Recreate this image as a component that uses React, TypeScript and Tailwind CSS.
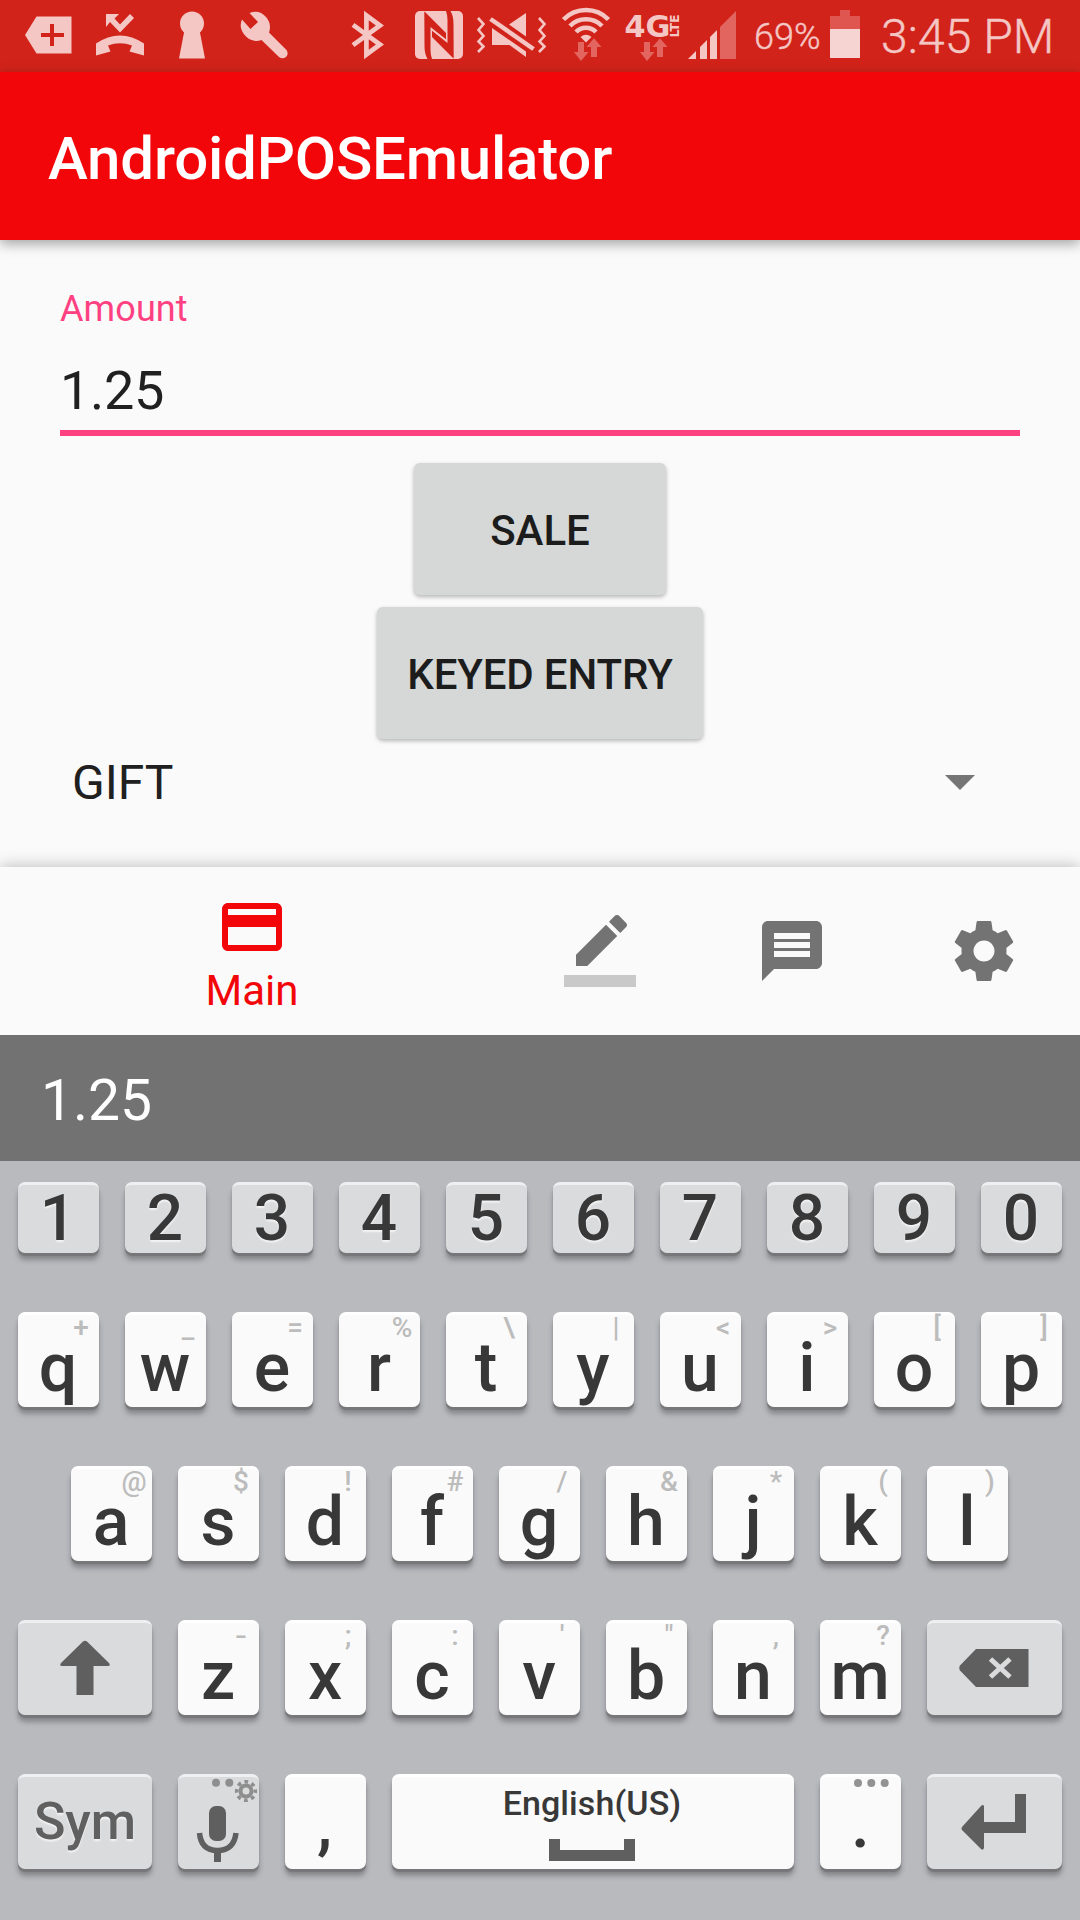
import type { ReactNode } from "react";

type IconProps = { x: number; w: number; className: string; children: ReactNode };

/* Status icons share one 72px tall strip; x is where the drawing starts in it. */
function StatusIcon({ x, w, className, children }: IconProps) {
  return (
    <svg viewBox={`${x} 0 ${w} 72`} width={w} height={72} className={`shrink-0 ${className}`}>
      {children}
    </svg>
  );
}

function DataArrows({ x }: { x: number }) {
  return (
    <g fill="#e2655f" transform={`translate(${x} 0)`}>
      <path d="M4 42h6v10h4.500L7 61 0 52h4z" />
      <path d="M17 57h6V47h4.500L20 38.300 12.500 47H17z" />
    </g>
  );
}

function StatusBar() {
  return (
    <div className="flex h-[72px] items-start bg-[#d2231a] text-[#f4c6c4]">
      <StatusIcon x={24} w={50} className="ml-6 fill-current">
        <path d="M25 35 36.500 16.500H71.500V53.500H36.500Z" />
        <path d="M50 24h4v9h10v4H54v9h-4v-9h-9v-4h9z" fill="#d2231a" />
      </StatusIcon>
      <StatusIcon x={95} w={52} className="ml-[21px] fill-current">
        <path d="M106 14h13l-4.500 4.500 5.500 6L130 14l4 4-14 14.500L110 22l-4 5z" />
        <path d="M96 43.500q24-16 48 0V55.500l-14.500-4 2.500-6q-12-4.500-24 0l2.500 6L96 55.500z" />
      </StatusIcon>
      <StatusIcon x={178} w={30} className="ml-[31px] fill-current">
        <circle cx={192} cy={23.500} r={12} />
        <path d="M184.500 30h15L205 58.500H179z" />
      </StatusIcon>
      <StatusIcon x={239} w={50} className="ml-[31px] fill-current">
        <path d="M249.500 13Q259 9 266 17 272 24 269 32.500L286.500 50Q289 54 286 57 282.500 59.500 279 57L261.500 40Q253 43 246 36.500 238 28 242 19.500L250.500 29 258 22Z" />
      </StatusIcon>
      <StatusIcon x={350} w={36} className="ml-[61px]">
        <path d="M353 24.800 380 44.500 366.400 54.500V15.500L380 25.500 353 45.200" fill="none" stroke="currentColor" strokeWidth={4.700} />
      </StatusIcon>
      <StatusIcon x={414} w={50} className="ml-7">
        <rect x={415} y={11} width={48} height={48} rx={5} fill="#f4c6c4" />
        <g fill="#d2231a">
          <path d="M424.300 11.500 425.500 12.500 446 33V39.300L430.500 27V50Q430.700 56 432 59H427.500Q424.500 54 424.500 46Z" />
          <path d="M453.700 58.500 452.500 57.500 432 37V30.700L447.500 43V20Q447.300 14 446 11H450.500Q453.500 16 453.500 24Z" />
        </g>
      </StatusIcon>
      <StatusIcon x={476} w={72} className="ml-3">
        <g fill="none" stroke="currentColor" strokeWidth={2.600}>
          <path d="M478 18 483.500 24 478.500 30 483.500 36 478.500 41.500 483.500 46.500 478 52" />
          <path d="M539 18 544.500 24 539.500 30 544.500 36 539.500 41.500 544.500 46.500 539 52" />
          <path d="M490.500 19 533.500 49" strokeWidth={4.500} />
        </g>
        <path fill="currentColor" d="M492 28 526 51.500V57L509.500 45H492zM526 13V36.500L509 24.500z" />
      </StatusIcon>
      <StatusIcon x={560} w={52} className="ml-3">
        <g fill="none" stroke="currentColor" strokeWidth={4.600}>
          <path d="M563.500 19.500A31.500 31.500 0 0 1 608.500 19.500" />
          <path d="M570 26A22.500 22.500 0 0 1 602 26" />
          <path d="M576 32A14 14 0 0 1 596 32" />
        </g>
        <path d="M580.500 37Q586 32.500 591.500 37L586 42.500z" fill="currentColor" />
        <DataArrows x={574} />
      </StatusIcon>
      <StatusIcon x={624} w={60} className="ml-3 fill-current font-['DejaVu_Sans'] font-bold">
        <text x={624.500} y={37} fontSize={30} textLength={46} lengthAdjust="spacingAndGlyphs">4G</text>
        <text transform="translate(679 37.500) rotate(-90)" fontSize={12} textLength={23} lengthAdjust="spacingAndGlyphs">LTE</text>
        <DataArrows x={640} />
      </StatusIcon>
      <StatusIcon x={688} w={50} className="ml-1 fill-current">
        <path d="M688 59 696 51V59zM700 47 707 40V59H700zM710 37 717 30V59H710z" />
        <path d="M720 27 736 11V59H720z" fill="#e2655f" />
      </StatusIcon>
      <span className="ml-[16px] w-[76px] pt-[16px] font-light text-[36px] leading-[42px] [-webkit-text-stroke:0.4px_#f4c6c4]">69%</span>
      <StatusIcon x={830} w={30} className="">
        <path d="M840 10h10v6h10v13H830V16h10z" fill="#df5650" />
        <path d="M830 29h30v29H830z" fill="#f6d4d2" />
      </StatusIcon>
      <span className="ml-[21px] pt-[9px] text-[48px] font-light leading-[56px] tracking-[0.1px] [-webkit-text-stroke:0.4px_#f4c6c4]">3:45 PM</span>
    </div>
  );
}

function Content() {
  return (
    <main className="flex h-[627px] flex-col px-[60px] text-[#202020]">
      <label className="pt-[48px] text-[36px] leading-[42px] tracking-[0.1px] text-[#ff4081]">Amount</label>
      <div className="mt-[20px] h-[86px] border-b-6 border-[#ff4081] pt-1.5 text-[54px] leading-[70px] tracking-[-0.3px]">1.25</div>
      <div className="flex flex-col items-center gap-3 pt-[27px] text-[42px] font-medium text-[#1c1c1c]">
        <button className="h-[132px] w-[252px] rounded-[6px] bg-[#d6d7d7] pt-[2px] shadow-[0_2px_4px_rgba(0,0,0,0.28)]">SALE</button>
        <button className="h-[132px] w-[326px] rounded-[6px] bg-[#d6d7d7] pt-[2px] tracking-[-0.15px] shadow-[0_2px_4px_rgba(0,0,0,0.28)]">KEYED ENTRY</button>
      </div>
      <div className="flex h-[86px] items-center justify-between pl-3 pr-[45px] text-[48px]">
        <span className="pt-[2px]">GIFT</span>
        <svg width={30} height={15} viewBox="0 0 30 15" fill="#757575"><path d="M0 0h30L15 15z" /></svg>
      </div>
    </main>
  );
}

const navIcons = [
  <g key="sign">
    <path d="M17.750 7 14 3.250l-10 10V17h3.750l10-10zm2.960-2.960c.39-.39.39-1.020 0-1.410L18.370.29c-.39-.39-1.020-.39-1.410 0L15 2.250 18.750 6l1.960-1.960z" />
    <path fillOpacity={0.36} d="M0 20h24v4H0z" />
  </g>,
  <path key="msg" d="M20 2H4c-1.100 0-1.990.9-1.990 2L2 22l4-4h14c1.100 0 2-.9 2-2V4c0-1.100-.9-2-2-2zm-2 12H6v-2h12v2zm0-3H6V9h12v2zm0-3H6V6h12v2z" />,
  <path key="cfg" d="M19.430 12.980c.04-.32.07-.64.07-.98s-.03-.66-.07-.98l2.110-1.650c.19-.15.24-.42.12-.64l-2-3.460c-.12-.22-.39-.3-.61-.22l-2.490 1c-.52-.4-1.080-.73-1.690-.98l-.38-2.650C14.460 2.180 14.250 2 14 2h-4c-.25 0-.46.18-.49.42l-.38 2.650c-.61.25-1.170.59-1.690.98l-2.490-1c-.23-.09-.49 0-.61.22l-2 3.460c-.13.22-.07.49.12.64l2.110 1.650c-.04.32-.07.65-.07.98s.03.66.07.98l-2.110 1.650c-.19.15-.24.42-.12.64l2 3.460c.12.22.39.3.61.22l2.490-1c.52.4 1.080.73 1.690.98l.38 2.650c.03.24.24.42.49.42h4c.25 0 .46-.18.49-.42l.38-2.650c.61-.25 1.170-.59 1.690-.98l2.490 1c.23.09.49 0 .61-.22l2-3.460c.12-.22.07-.49-.12-.64l-2.110-1.650zM12 15.500c-1.930 0-3.500-1.570-3.500-3.500s1.570-3.500 3.500-3.500 3.500 1.570 3.500 3.500-1.570 3.500-3.500 3.500z" />,
];

function BottomNav() {
  return (
    <nav className="relative flex h-[168px] bg-[#fafafa] shadow-[0_-2px_14px_rgba(0,0,0,0.22)]">
      <div className="flex w-[504px] flex-col items-center pt-6 text-[42px] leading-[48px] text-[#f2060a]">
        <svg width={72} height={72} viewBox="0 0 24 24" fill="currentColor">
          <path d="M20 4H4c-1.110 0-1.990.89-1.990 2L2 18c0 1.110.89 2 2 2h16c1.110 0 2-.89 2-2V6c0-1.110-.89-2-2-2zm0 14H4v-6h16v6zm0-10H4V6h16v2z" />
        </svg>
        <span className="mt-1">Main</span>
      </div>
      {navIcons.map((icon, i) => (
        <div key={i} className="flex w-[192px] justify-center pt-12">
          <svg width={72} height={72} viewBox="0 0 24 24" fill="#737373">{icon}</svg>
        </div>
      ))}
    </nav>
  );
}

const keyShadow = "shadow-[0_3px_1px_#77777a,0_7px_5px_rgba(60,60,65,0.4)]";

function Key({ dark = false, wide = "w-[81px]", height = "h-[95px]", children }: { dark?: boolean; wide?: string; height?: string; children: ReactNode }) {
  return (
    <div
      className={`relative flex shrink-0 justify-center rounded-[7px] border-t-[3px] ${wide} ${height} ${keyShadow} ${
        dark ? "border-[#eeeff0] bg-[#dadbdd]" : "border-white bg-[#fafafa]"
      }`}
    >
      {children}
    </div>
  );
}

function Letter({ char, hint }: { char: string; hint: string }) {
  return (
    <Key>
      <span className={`absolute left-[43px] top-[-4px] w-10 text-center text-[28px] font-medium leading-[34px] text-[#bcbcbc] ${hint === "-" ? "scale-x-125" : ""}`}>{hint}</span>
      <span className="relative -left-[0.5px] pt-[13px] text-[68px] font-medium leading-[80px]">{char}</span>
    </Key>
  );
}

const row2 = [["q", "+"], ["w", "_"], ["e", "="], ["r", "%"], ["t", "\\"], ["y", "|"], ["u", "<"], ["i", ">"], ["o", "["], ["p", "]"]];
const row3 = [["a", "@"], ["s", "$"], ["d", "!"], ["f", "#"], ["g", "/"], ["h", "&"], ["j", "*"], ["k", "("], ["l", ")"]];
const row4 = [["z", "-"], ["x", ";"], ["c", ":"], ["v", "'"], ["b", "\""], ["n", ","], ["m", "?"]];

function Keyboard() {
  return (
    <section className="flex h-[759px] flex-col gap-[59px] bg-[#b9babe] px-[18px] pt-[21px] text-[#383838]">
      <div className="flex justify-between">
        {"1234567890".split("").map((n) => (
          <Key key={n} dark height="h-[71px]">
            <span className="relative -left-[0.5px] -top-1 text-[64px] font-medium leading-[75px] [text-shadow:0_2px_2px_rgba(255,255,255,0.7)]">{n}</span>
          </Key>
        ))}
      </div>
      <div className="flex justify-between">{row2.map(([c, h]) => <Letter key={c} char={c} hint={h} />)}</div>
      <div className="flex gap-[26px] pl-[53px]">{row3.map(([c, h]) => <Letter key={c} char={c} hint={h} />)}</div>
      <div className="flex justify-between">
        <Key dark wide="w-[134px]">
          <svg width={52} height={58} viewBox="0 0 52 58" className="mt-[17px] fill-[#5f5f5f]">
            <path d="M24 1.500Q26 0 28 1.500L50 23Q52 26 49 26H34.500V55H17.500V26H3Q0 26 2 23z" />
          </svg>
        </Key>
        {row4.map(([c, h]) => <Letter key={c} char={c} hint={h} />)}
        <Key dark wide="w-[135px]">
          <svg width={70} height={38} viewBox="0 0 70 38" className="mr-[1px] mt-[26px]">
            <path d="M17 0H69.500V38H17L1 21.500Q-.5 19 1 16.500z" fill="#5f5f5f" />
            <path d="M31.500 10 51 28M51 10 31.500 28" stroke="#dadbdd" strokeWidth={5} />
          </svg>
        </Key>
      </div>
      <div className="flex justify-between">
        <Key dark wide="w-[134px]">
          <span className="pt-[14px] text-[52px] font-medium leading-[62px] text-[#606060] [text-shadow:0_2px_2px_rgba(255,255,255,0.7)]">Sym</span>
        </Key>
        <Key dark>
          <svg width={81} height={92} viewBox="178 1777 81 92" className="shrink-0">
            <g fill="#8e8e8e">
              <circle cx={216} cy={1782.700} r={4} />
              <circle cx={229.300} cy={1782.700} r={4} />
              <circle cx={246} cy={1791} r={5.500} fill="none" stroke="#8e8e8e" strokeWidth={4} />
              <circle cx={246} cy={1791} r={9.300} fill="none" stroke="#8e8e8e" strokeWidth={3.600} strokeDasharray="3.650 3.650" strokeDashoffset={1.800} />
            </g>
            <rect x={209} y={1806} width={17} height={35} rx={7} fill="#5f5f5f" />
            <path d="M199.500 1833Q201 1850.500 217.500 1850.500T236 1833" fill="none" stroke="#5f5f5f" strokeWidth={5.500} />
            <path d="M214 1851h7v11h-7z" fill="#5f5f5f" />
          </svg>
        </Key>
        <Key><span className="relative -left-px pt-[7px] text-[68px] font-medium leading-[80px]">,</span></Key>
        <Key wide="w-[402px]">
          <div className="mr-[1px] flex flex-col items-center pt-[6px] text-[34px] font-medium leading-[40px]">
            <span className="mr-[1px] tracking-[0.1px]">English(US)</span>
            <svg width={86} height={22} viewBox="0 0 86 22" className="mt-[16px]"><path d="M0 0H11V11H75V0H86V22H0z" fill="#5f5f5f" /></svg>
          </div>
        </Key>
        <Key>
          <svg width={36} height={10} viewBox="0 0 36 10" className="absolute left-[33px] top-[1px] fill-[#929292]">
            <circle cx={5} cy={5} r={4} /><circle cx={18.300} cy={5} r={4} /><circle cx={31.700} cy={5} r={4} />
          </svg>
          <span className="relative pt-[7px] text-[68px] font-medium leading-[80px]">.</span>
        </Key>
        <Key dark wide="w-[135px]">
          <svg width={66} height={58} viewBox="0 0 66 58" className="mr-[2px] mt-[17px] fill-[#5f5f5f]">
            <path d="M54 0H65V39H23V54Q22 57 20 55L1 36Q0 34.500 1 33L20 12Q22 10 23 12V28H54z" />
          </svg>
        </Key>
      </div>
    </section>
  );
}

export default function App() {
  return (
    <div className="flex h-[1920px] w-[1080px] flex-col overflow-hidden bg-[#fafafa] font-['Roboto',sans-serif]">
      <StatusBar />
      <header className="relative h-[168px] bg-[#f2060a] pl-12 pt-[52px] text-[60px] font-medium leading-[70px] tracking-[-0.2px] text-white shadow-[0_4px_12px_rgba(0,0,0,0.35)]">
        AndroidPOSEmulator
      </header>
      <Content />
      <BottomNav />
      <div className="relative flex h-[126px] items-center bg-[#727272] pl-[41px] pt-1.5 text-[57px] text-white">1.25</div>
      <Keyboard />
    </div>
  );
}
